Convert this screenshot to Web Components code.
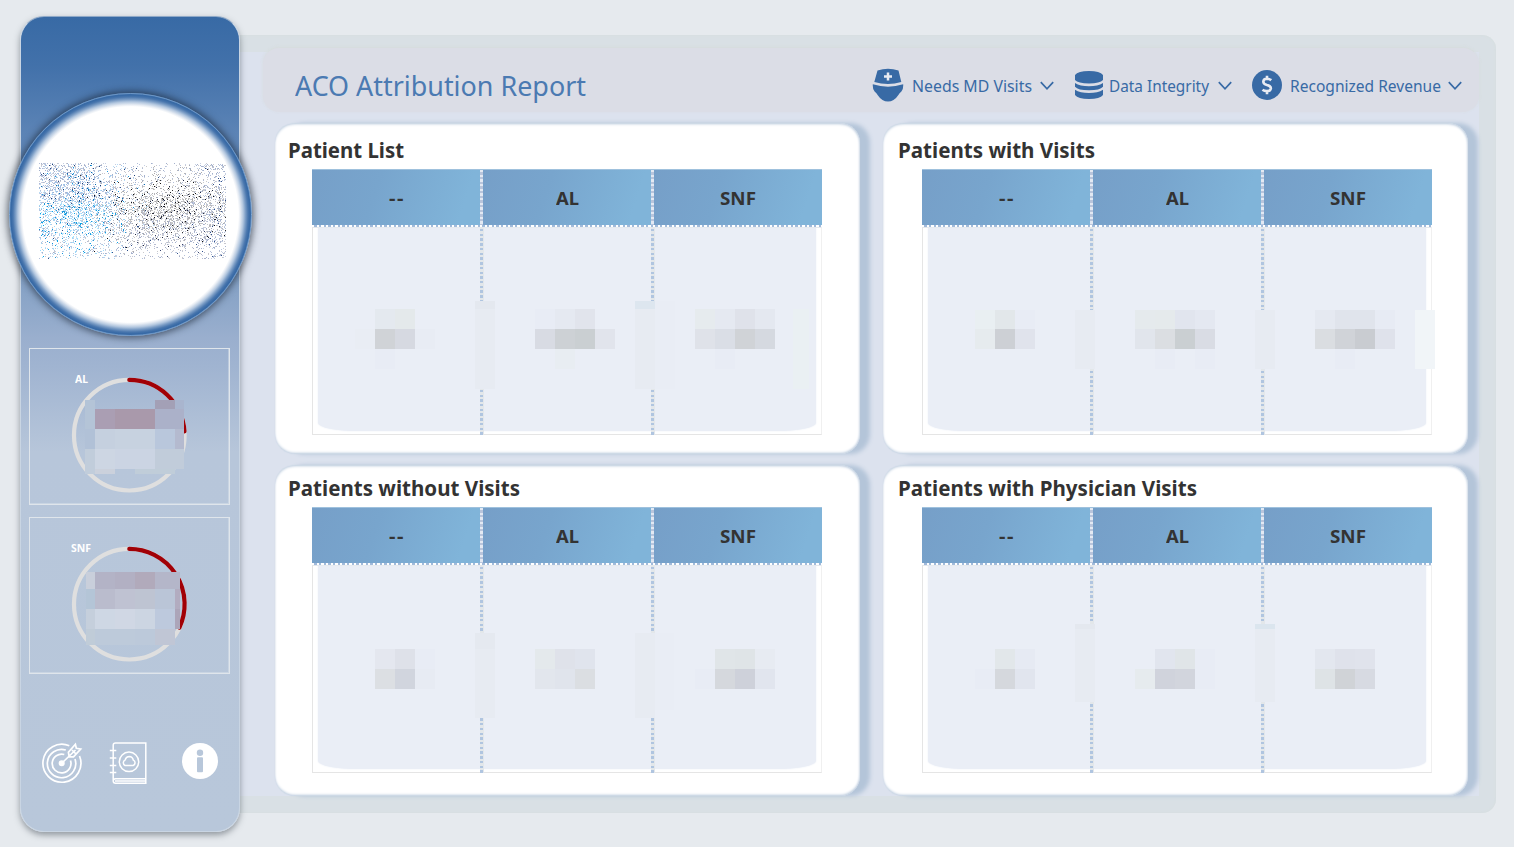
<!DOCTYPE html>
<html lang="en">
<head>
<meta charset="utf-8">
<title>ACO Attribution Report</title>
<style>
html,body{margin:0;height:847px;overflow:hidden;background:#e6eaee;font-family:"Noto Sans","Open Sans",sans-serif;color:#333}
</style>
</head>
<body>
<report-page></report-page>
<script>
const define=(name,html,after)=>{
  const t=document.createElement('template');t.innerHTML=html;
  customElements.define(name,class extends HTMLElement{
    connectedCallback(){
      if(this.shadowRoot)return;
      this.attachShadow({mode:'open'}).appendChild(t.content.cloneNode(true));
      if(after)after(this,this.shadowRoot);
    }
  });
};

/* Single-line label condensed to a given width */
define('fit-label',`<style>
:host{display:block;white-space:nowrap}
span{display:inline-block;transform-origin:0 50%}
</style><span><slot></slot></span>`,(el,root)=>{
  const w=+el.getAttribute('width');
  el.style.width=w+'px';
  const s=root.querySelector('span');
  s.style.transform='scaleX('+(w/s.getBoundingClientRect().width).toFixed(4)+')';
});

/* Speckled logo inside a round badge */
define('logo-badge',`<style>
:host{box-sizing:border-box;display:flex;align-items:center;justify-content:center;width:243px;height:243px;border-radius:50%;
border:1px solid #6d97c6;
background:radial-gradient(circle closest-side,#fff 89.5%,#e8edf4 91%,#b3c7df 93.5%,#7a9cc5 95.5%,#4a77ae 97.5%,#386aa6 99%);
box-shadow:0 0 7px 2px rgba(20,30,45,.6)}
svg{display:block;width:188px;height:96px;margin:-7px 0 0 5px}
</style><svg viewBox="0 0 188 96" shape-rendering="crispEdges"></svg>`,(el,root)=>{
  let s=987654;
  const r=()=>{s=(s+0x6D2B79F5)|0;let t=Math.imul(s^(s>>>15),1|s);t=(t+Math.imul(t^(t>>>7),61|t))^t;return((t^(t>>>14))>>>0)/4294967296};
  const g=(x,y,cx,cy,sx,sy)=>Math.exp(-(((x-cx)/sx)**2+((y-cy)/sy)**2));
  const paths={};
  const pick=a=>a[Math.floor(r()*a.length)];
  for(let y=0;y<96;y++)for(let x=0;x<187;x++){
    const blue=g(x,y,32,44,40,34),blk=g(x,y,128,44,50,22),nav=g(x,y,125,68,50,16);
    const edge=g(x,y,0,6,50,26)+g(x,y,187,40,26,60);
    const d=.1+.36*blue+.32*blk+.16*nav+.2*edge;
    if(r()>d)continue;
    const t=r()*(blue+blk+nav*.6+edge*.6+.12);
    const v=r();let c;
    if(t<blue) c=y<40?(v<.15?pick(['#0b6fb5','#1c3f75','#1d9ce0']):pick(['#a8b9dc','#9fc4ea','#b9c7e0','#b6dcf7']))
                     :(v<.2?pick(['#08a4e8','#1593dc','#2a9ad5']):pick(['#a9d5f5','#c0e2fa','#b4c8e4','#9bdcfb']));
    else if(t<blue+blk) c=v<.13?pick(['#111','#333','#1e2540']):pick(['#bdbdbd','#a9a9ab','#c9c9c9','#b4b4b8']);
    else if(t<blue+blk+nav*.6) c=v<.06?'#3a466f':pick(['#b7bdd2','#c6cbdb','#a9b0c8','#c9c9cc']);
    else c=v<.04?'#2d4f8b':pick(['#b3bfd9','#c6cfe2','#a3b0cc','#c8c8cf']);
    paths[c]=(paths[c]||'')+'M'+x+' '+y+'h1v1h-1z';
  }
  root.querySelector('svg').innerHTML=Object.entries(paths).map(([c,d])=>'<path fill="'+c+'" d="'+d+'"/>').join('');
});

/* Circular gauge tile */
define('gauge-tile',`<style>
:host{box-sizing:border-box;display:block;position:relative;width:201px;height:157px;border:1px solid #dfe5eb;box-shadow:inset -1px -1px 0 rgba(225,231,238,.45)}
svg{display:block;width:199px;height:155px;overflow:visible}
fit-label{position:absolute;font-size:10.5px;line-height:14px;font-weight:700;color:#fff;top:23px}
</style><svg viewBox="30 349 199 155"><circle cx="129.3" cy="435.2" r="55.3" fill="none" stroke="#dfdfdf" stroke-width="4.2"/><path class="arc" fill="none" stroke="#a10006" stroke-width="4.2" stroke-linecap="round"/><g shape-rendering="crispEdges"></g></svg><div></div>`,(el,root)=>{
  const deg=+el.getAttribute('sweep')*Math.PI/180;
  root.querySelector('.arc').setAttribute('d','M129.3 379.9A55.3 55.3 0 0 1 '+(129.3+55.3*Math.sin(deg))+' '+(435.2-55.3*Math.cos(deg)));
  const cells=el.getAttribute('cells').split(';').map(c=>c.split(','));
  root.querySelector('g').innerHTML=cells.map(c=>'<rect x="'+c[0]+'" y="'+c[1]+'" width="'+c[2]+'" height="'+c[3]+'" fill="#'+c[4]+'"/>').join('');
  root.querySelector('div').innerHTML='<fit-label width="'+el.getAttribute('lw')+'" style="left:'+el.getAttribute('lx')+'px">'+el.getAttribute('label')+'</fit-label>';
});

define('side-bar',`<style>
:host{box-sizing:border-box;position:relative;z-index:2;flex:none;display:flex;flex-direction:column;align-items:flex-start;width:220px;height:816px;margin:16px 0 0 20px;border-radius:24px;border:1px solid #c9d5e3;border-top-color:#8fa9c8;
background:linear-gradient(#386aa5 0,#4271aa 6%,#5b83b5 14%,#7396be 27%,#9aafce 39.5%,#a0b4d1 43%,#b7c6da 53.5%,#b8c7da 100%);
box-shadow:0 3px 6px rgba(60,70,80,.5)}
logo-badge{flex:none;margin:76px 0 0 -12px}
gauge-tile{flex:none;margin:12px 0 0 8px}
gauge-tile+gauge-tile{margin-top:12px}
nav{align-self:stretch;display:flex;align-items:center;margin:67px 0 0 20px}
svg{display:block;fill:none;stroke:#fff}
</style>
<logo-badge></logo-badge>
<gauge-tile label="AL" lx="45" lw="13" sweep="86" cells="85,400,10,29,b4c4d7;155,400,20,9,a3a0b6;175,400,9,9,a9b5ce;95,409,20,20,aa9eb3;115,409,40,20,a999ab;155,409,29,20,abb1c9;85,429,10,20,b1c1d7;95,429,20,20,c5d0df;115,429,40,20,c7d2e0;155,429,20,20,b9c7dc;175,429,9,20,b4bacf;85,449,10,25,c1cddb;95,449,20,20,cdd6e3;115,449,40,20,cbd4e3;155,449,29,20,c1ccda;95,469,20,5,cbd1dc;135,469,40,5,c0cdd9"></gauge-tile>
<gauge-tile label="SNF" lx="41" lw="20" sweep="115" cells="86,403,9,17,c9cfdb;95,403,20,17,b3b3c6;115,403,20,17,b2b0c3;135,403,20,17,b1aabb;155,403,25,17,b4b6c9;86,420,9,20,b4c5d7;95,420,20,20,babccd;115,420,20,20,bfc2d2;135,420,20,20,bec4d2;155,420,20,20,bac5d7;175,420,5,20,b2acc0;86,440,9,20,c5cfdc;95,440,20,20,ced7e4;115,440,20,20,d0d7e4;135,440,20,20,ccd5e2;155,440,20,20,bdc9dd;175,440,5,20,aca5b9;86,460,9,16,c0ccd8;95,460,40,16,bdcada;135,460,20,16,bcc9da;155,460,20,16,c0c6d5"></gauge-tile>
<nav>
<svg width="42" height="42" viewBox="0 0 42 42" stroke-width="1.7"><path d="M28.3 3.7A19 19 0 1 0 38.5 14"/><path d="M24.8 8A14.2 14.2 0 1 0 34 17"/><path d="M23.3 12.5A9.4 9.4 0 1 0 29.5 18.5"/><circle cx="20.7" cy="21.2" r="2.2" fill="#fff"/><path d="M21 21 34.5 8M28.2 14.8l-.8-4.5 7-8 .9 4 4.4.7-7.2 7.8zM31 8l4 4"/></svg>
<svg style="margin-left:26px" width="40" height="44" viewBox="0 0 40 44" stroke-width="1.5"><path d="M4.2 40V4.2Q4.2 2 6.5 2H36.8V42.2H6.5Q4.2 42.2 4.2 40 4.2 38 6.5 37.7H36.8M6 40H36.8M.8 9.5h6.5M.8 17h6.5M.8 24.5h6.5M.8 31.5h6.5"/><circle cx="20" cy="20.8" r="9.7"/><path d="M16 24.5a3 3 0 0 1 0-5.4q1.2-3.5 4.3-3.6 3.3.2 4 3.6a2.9 2.9 0 0 1-.2 5.4z"/></svg>
<svg style="margin:-5px 0 0 32px" width="38" height="38" viewBox="0 0 38 38" stroke="none"><circle cx="19" cy="19" r="18" fill="#fff" stroke="none"/><circle cx="19" cy="10.7" r="3.2" fill="#b8c7da" stroke="none"/><rect x="16" y="15.3" width="6" height="15" rx="1" fill="#b8c7da" stroke="none"/></svg>
</nav>`);

define('menu-item',`<style>
:host{display:flex;align-items:center;flex:none;color:#386aa5;font-size:16px;line-height:22px;cursor:pointer}
svg{display:block;margin-top:1px;fill:none;stroke:currentColor;stroke-width:1.7}
</style><slot name="icon"></slot><slot></slot><svg width="14" height="10" viewBox="0 0 14 10"><path d="M.8 1.2 7 7.8 13.2 1.2"/></svg>`);

define('report-header',`<style>
:host{box-sizing:border-box;display:flex;align-items:center;width:1216px;height:64px;margin:-4px 0 0 24px;padding:10px 0 0 32px;border-radius:16px;background:#dbdde6;box-shadow:0 -1px 3px rgba(214,220,220,.9)}
.title{font-size:27px;line-height:36px;color:#4b7ab2;margin-top:2px}
svg{display:block;fill:#386aa5}
</style>
<fit-label class="title" width="291">ACO Attribution Report</fit-label>
<menu-item style="margin-left:286px"><svg slot="icon" width="32" height="35" viewBox="0 0 32 35"><path d="M5.5 2.6Q16 -1 26.5 2.6L29.3 14Q16 18 2.3 14zM.8 16.3Q16 21 31.2 16.3 31.5 21.500 29.4 23.6 27.500 25 26 27.5 22 33.600 16 33.6T6 27.5Q4.500 25 2.6 23.600 .500 21.5 .8 16.3z"/><path d="M16 4.4v8M12 8.4h8" stroke="#e8ebf2" stroke-width="2.5"/></svg><fit-label width="120" style="margin:2px 8px 0 8px">Needs MD Visits</fit-label></menu-item>
<menu-item style="margin-left:21px"><svg slot="icon" width="28" height="28" viewBox="0 0 28 28"><path d="M0 4Q3 0 14 0T28 4V9Q25 12.4 14 12.4T0 9zM0 12Q5 15.2 14 15.2T28 12V15.7Q25 19.2 14 19.2T0 15.7zM0 18.7Q5 22 14 22T28 18.7V24Q25 28 14 28T0 24z"/></svg><fit-label width="100" style="margin:2px 9px 0 6px">Data Integrity</fit-label></menu-item>
<menu-item style="margin-left:20px"><svg slot="icon" width="30" height="30" viewBox="0 0 30 30"><circle cx="15" cy="15" r="15"/><path d="M19.2 10.2Q17.5 8.8 15 8.8 11.3 8.9 11.3 11.7 11.4 13.9 15 14.9 19 15.9 18.9 18.4 18.5 21.1 15 21.1 12.3 21.1 10.5 19.7M15 5.8V9M15 21V24.2" fill="none" stroke="#e8ebf2" stroke-width="2.6"/></svg><fit-label width="151" style="margin:2px 7px 0 8px">Recognized Revenue</fit-label></menu-item>`);

define('patient-card',`<style>
:host{box-sizing:border-box;display:block;width:585px;height:331px;padding:12px 0 0 13px;border-radius:20px;background:#fff;
box-shadow:inset 0 2px 3px -1px #b9c9dc,inset 0 -2px 3px -1px #b9c9dc,inset -1px 0 3px -1px #b9c9dc,0 0 1px #c5d2e2,10px 0 4px #b4c5d9}
:host([right]){padding-left:15px}
:host([low]){padding-top:8px}
.name{font-size:20.5px;line-height:30px;font-weight:700;color:#333}
.table{width:510px;margin:4px 0 0 24px}
.head{display:grid;grid-template-columns:168px 3px 168px 3px 168px;height:55px;border-top:1px solid #9fc1dd}
.head b{display:flex;align-items:center;justify-content:center;font-size:18px;line-height:24px;background:linear-gradient(108deg,#769fc8,#78a5cd 38%,#80b4d9 88%);box-sizing:border-box}
.head .dash{flex:none;letter-spacing:1.4px;margin-left:1px}
.head i{background:repeating-linear-gradient(#e3e9f3 0 2.3px,#b9c5dc 2.3px 4.67px)}
.rule{height:2px;background:repeating-linear-gradient(90deg,#fff 0 2.3px,#a0b9da 2.3px 4.67px)}
.body{box-sizing:border-box;position:relative;height:208px;border:1px solid #e5e5e5;border-right-color:#f0f0f0;border-top-color:#e4e8ec;display:flex;padding:0 5px 3px}
.fill{flex:1;background:#eaeef6;border-radius:0 0 40px 40px/0 0 8px 8px;box-shadow:0 0 2px #eaeef6}
.body svg{position:absolute;left:-1px;top:-1px;width:510px;height:208px;overflow:visible}
</style>
<fit-label class="name"></fit-label>
<div class="table"><div class="head"><b><fit-label class="dash" width="16">--</fit-label></b><i></i><b><fit-label width="23">AL</fit-label></b><i></i><b><fit-label width="36">SNF</fit-label></b></div><div class="rule"></div>
<div class="body"><div class="fill"></div><svg viewBox="0 0 510 208" shape-rendering="crispEdges"><g stroke="#e3e7ea" stroke-width="4"><path d="M170 0V208M341 0V208"/></g><g stroke="#b0c5e0" stroke-width="3" stroke-dasharray="2.4 2.33"><path d="M169.5 2V208M340.5 2V208"/></g><g class="cells"></g></svg></div></div>`,(el,root)=>{
  const n=root.querySelector('.name');
  n.textContent=el.getAttribute('name');
  const w=+el.getAttribute('name-width');
  n.style.width=w+'px';
  const s=n.shadowRoot.querySelector('span');
  s.style.transform='none';
  s.style.transform='scaleX('+w/s.getBoundingClientRect().width+')';
  root.querySelector('.cells').innerHTML=el.cells.map(c=>'<rect x="'+c[0]+'" y="'+c[1]+'" width="'+(c[3]||20)+'" height="'+(c[4]||20)+'" fill="#'+c[2]+'"/>').join('');
});

define('report-page',`<style>
:host{display:flex;width:1514px;height:847px}
.frame{box-sizing:border-box;flex:none;width:1257px;height:778px;margin-top:35px;margin-left:-1px;padding:17px 17px 17px 0;border-radius:0 14px 14px 0;background:#d9e0e5;box-shadow:inset 0 0 3px #d6dedd}
.inner{height:744px;background:#dce2ee;display:flow-root}
.cards{display:grid;grid-template-columns:585px 585px;grid-template-rows:331px 331px;gap:11px 23px;margin:11px 0 0 36px}
</style>
<side-bar></side-bar>
<div class="frame"><div class="inner"><report-header></report-header><div class="cards"></div></div></div>`,(el,root)=>{
  const bars=(x,y,h,th,tc)=>[[x,y,'e7ebf2',20,h]].concat(th?[[x,y,tc,20,th]]:[]);
  const row=(x,y,cs)=>cs.split(' ').map((c,i)=>[x+20*i,y,c]).filter(c=>c[2]!=='-');
  const data=[
   {name:'Patient List',w:116,cells:[...row(43,82,'- e4e9ef e4e9eb'),...row(43,102,'e9edf4 d0d3d7 d6d9e1 e8ecf4'),...row(63,122,'e8ecf5'),
     ...bars(163,74,88,8,'e4e8ef'),...row(223,82,'e8ecf5 e5e9f1 e1e4ec'),...row(223,102,'d8dbe3 cdd1d5 cacfd2 e1e4ec'),...row(243,122,'e8edf2'),
     ...bars(323,74,88,8,'dde6ef'),[343,74,'e9edf5',20,88],...row(383,82,'e6ebee e5e9f1 dfe2ea e4e8f0'),...row(383,102,'dfe2e9 dadee6 d0d3d7 d5d9e0'),...row(403,122,'e8ecf5'),[481,82,'eaf0f3',16,80]]},
   {name:'Patients with Visits',w:197,right:1,cells:[...row(53,83,'e9eff2 e2e7ea e8ecf5'),...row(53,102,'e6ebee cdd0d5 e0e3ec'),...bars(153,83,59),
     ...row(213,83,'e5eaed e5eaec e1e5ee e4e8f1'),...row(213,102,'e1e5ec dbdee2 cacfd2 d9dce4'),...row(233,122,'e8ecf5 - e8ecf5'),...bars(333,83,59),
     ...row(393,83,'e5e9f1 e0e4ec e0e4ec e7ebf4'),...row(393,102,'dadde1 d0d3d8 c9ccd1 dfe2eb'),...row(413,122,'e8ecf5'),[493,83,'f1f5f8',20,59]]},
   {name:'Patients without Visits',w:232,low:1,cells:[...row(63,84,'e4e7ef dee1e9 e8ecf5'),...row(63,104,'dcdfe3 d1d5de e7ebf3'),...bars(163,68,85,16,'e5e9f0'),
     ...row(223,84,'e4e9ec dfe2ea e0e4ed'),...row(223,104,'e2e6ed e0e4ec dbdee2'),...bars(323,68,85),[343,68,'e9edf5',19,77],
     ...row(383,104,'e8ecf5'),...row(403,84,'e0e5e8 dfe4e7 e7ebf2'),...row(403,104,'d5d8dd ced1da e1e5ee')]},
   {name:'Patients with Physician Visits',w:299,low:1,right:1,cells:[...row(73,84,'e2e7ea e6eaf3'),...row(53,104,'e8ecf5 d5d8dd e1e5ee'),...bars(153,59,78,5,'e4e8ef'),
     ...row(233,84,'e1e5ee e0e5e8 e8ecf5'),...row(213,104,'e6ebee d0d3dc d2d5dd e8ecf5'),...bars(333,59,78,5,'dbe5ee'),
     ...row(393,84,'e3e7ef dfe2eb e0e3ec'),...row(393,104,'dee3e6 d0d3d7 d7dae2')]}
  ];
  const grid=root.querySelector('.cards');
  for(const d of data){
    const c=document.createElement('patient-card');
    c.cells=d.cells;c.setAttribute('name',d.name);c.setAttribute('name-width',d.w);
    if(d.right)c.setAttribute('right','');
    if(d.low)c.setAttribute('low','');
    grid.appendChild(c);
  }
});
</script>
</body>
</html>
